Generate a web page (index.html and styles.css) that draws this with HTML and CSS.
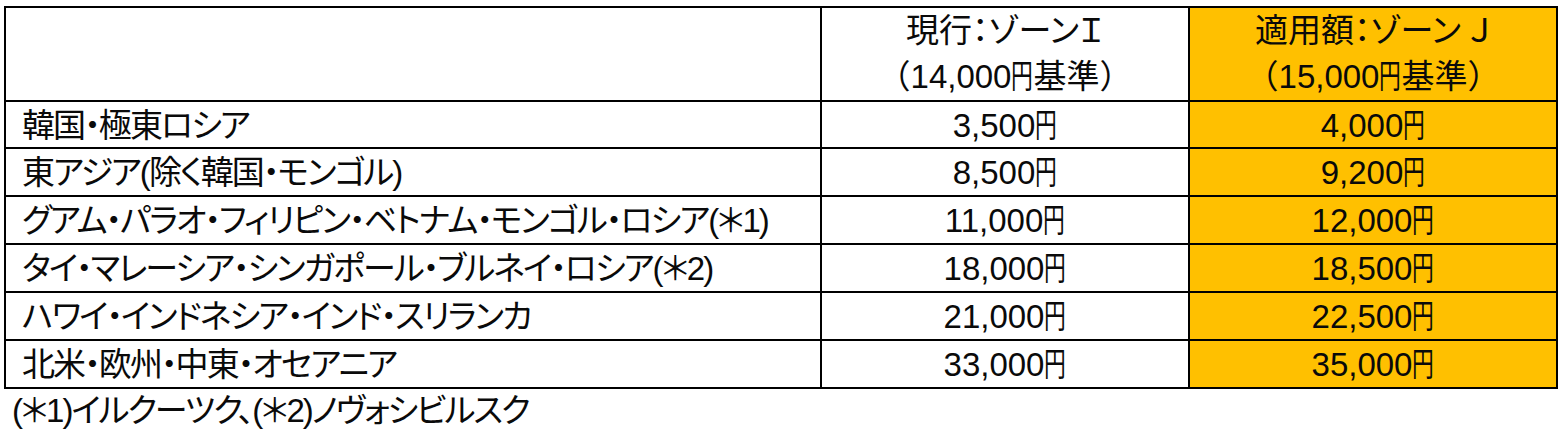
FILE: index.html
```html
<!DOCTYPE html>
<html lang="ja">
<head>
<meta charset="utf-8">
<title>ゾーン料金表</title>
<link rel="stylesheet" href="styles.css">
</head>
<body>
<div class="sheet">
  <div class="grid">
    <div class="cell head label"></div>
    <div class="cell head num"><span class="hl">現行：ゾーンＩ</span><span class="hl wide">（14,000<span class="yen">円</span>基準）</span></div>
    <div class="cell head num gold"><span class="hl">適用額：ゾーン Ｊ</span><span class="hl wide">（15,000<span class="yen">円</span>基準）</span></div>

    <div class="cell label first">韓国・極東ロシア</div>
    <div class="cell num first">3,500<span class="yen">円</span></div>
    <div class="cell num gold first">4,000<span class="yen">円</span></div>

    <div class="cell label">東アジア(除く韓国・モンゴル)</div>
    <div class="cell num">8,500<span class="yen">円</span></div>
    <div class="cell num gold">9,200<span class="yen">円</span></div>

    <div class="cell label">グアム・パラオ・フィリピン・ベトナム・モンゴル・ロシア(＊1)</div>
    <div class="cell num">11,000<span class="yen">円</span></div>
    <div class="cell num gold">12,000<span class="yen">円</span></div>

    <div class="cell label">タイ・マレーシア・シンガポール・ブルネイ・ロシア(＊2)</div>
    <div class="cell num">18,000<span class="yen">円</span></div>
    <div class="cell num gold">18,500<span class="yen">円</span></div>

    <div class="cell label">ハワイ・インドネシア・インド・スリランカ</div>
    <div class="cell num">21,000<span class="yen">円</span></div>
    <div class="cell num gold">22,500<span class="yen">円</span></div>

    <div class="cell label">北米・欧州・中東・オセアニア</div>
    <div class="cell num">33,000<span class="yen">円</span></div>
    <div class="cell num gold">35,000<span class="yen">円</span></div>
  </div>
  <p class="note">(＊1)イルクーツク、(＊2)ノヴォシビルスク</p>
</div>
</body>
</html>
```

FILE: styles.css
```css
html, body {
  margin: 0;
  padding: 0;
  background: #ffffff;
}

body {
  font-family: "Liberation Sans", "Noto Sans CJK JP", sans-serif;
  font-size: 33px;
  color: #0a0a0a;
  font-feature-settings: "palt";
}

.sheet {
  padding: 6px 0 0 4px;
}

.grid {
  display: grid;
  grid-template-columns: 816px 368px 368px;
  grid-template-rows: 94px 47px repeat(5, 48px);
  width: 1554px;
  border-top: 2px solid #000;
  border-left: 2px solid #000;
  box-sizing: border-box;
}

.cell {
  border-right: 2px solid #000;
  border-bottom: 2px solid #000;
  box-sizing: border-box;
  line-height: 46px;
  padding-top: 1px;
  white-space: nowrap;
  overflow: hidden;
}

.label {
  padding-left: 16px;
  letter-spacing: -1.9px;
}

.num {
  text-align: center;
}

.gold {
  background: #ffc000;
}

.head {
  display: flex;
  flex-direction: column;
  align-items: center;
  padding-top: 0;
}

.hl {
  display: block;
  line-height: 46px;
}

.wide {
  font-feature-settings: normal;
}

.yen {
  display: inline-block;
  width: 22px;
  transform: scaleX(0.66);
  transform-origin: left center;
}

.note {
  margin: 0;
  padding-left: 8px;
  line-height: 44px;
  letter-spacing: -2px;
}
```
